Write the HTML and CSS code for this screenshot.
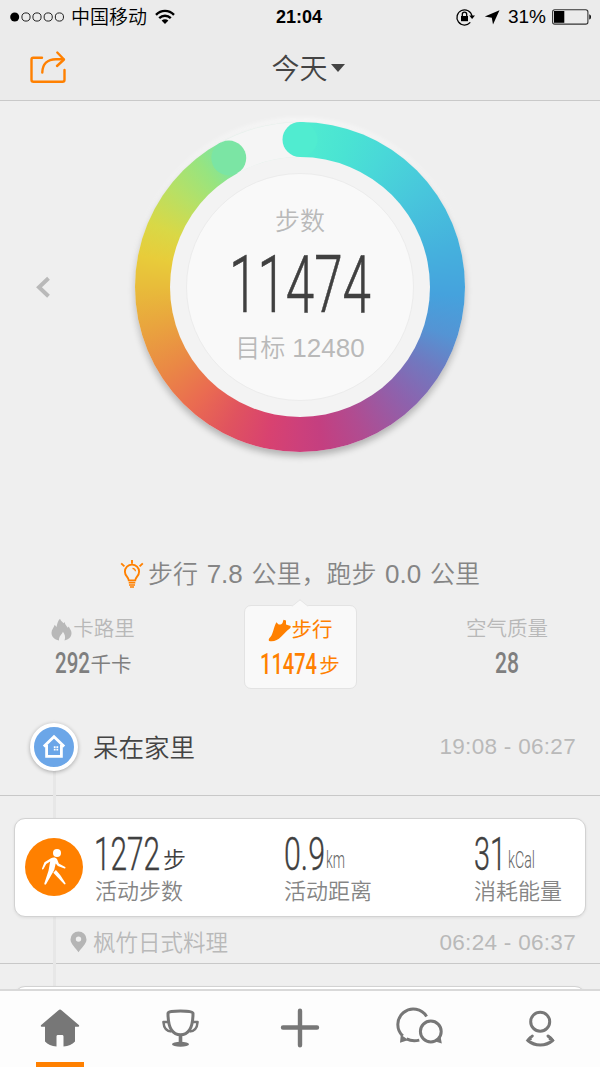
FILE: index.html
```html
<!DOCTYPE html>
<html lang="zh-CN">
<head>
  <meta charset="UTF-8">
  <title>今天</title>
  <link rel="stylesheet" href="styles.css">
</head>
<body>
  <div class="app">
    <div class="status">
      <div class="status-left">
        <svg width="54" height="12" viewBox="0 0 54 12">
          <circle cx="4.7" cy="6" r="4.5" fill="#000"/>
          <g fill="none" stroke="#222" stroke-width="1">
            <circle cx="16" cy="6" r="4.1"/><circle cx="27" cy="6" r="4.1"/>
            <circle cx="38.2" cy="6" r="4.1"/><circle cx="49.4" cy="6" r="4.1"/>
          </g>
        </svg>
        <span class="carrier">中国移动</span>
        <svg class="wifi" width="20" height="16" viewBox="0 0 20 16">
          <g fill="none" stroke="#000" stroke-width="2.4">
            <path d="M1 5.8C6 .6 14 .6 19 5.8"/>
            <path d="M4.2 9.2c3.3-3.2 8.3-3.2 11.6 0"/>
          </g>
          <path d="M10 15l-3.4-3.5c2-1.7 4.8-1.7 6.8 0z"/>
        </svg>
      </div>
      <div class="clock">21:04</div>
      <div class="status-right">
        <svg width="20" height="18" viewBox="0 0 20 18">
          <path d="M14.3 14.4A7.6 7.6 0 1 1 16 8" fill="none" stroke="#000" stroke-width="1.3"/>
          <path d="M13.2 7.4h5.8l-2.9 3.5z"/>
          <rect x="5" y="8" width="7" height="5.2"/>
          <path d="M6.3 8.4V6.3a2.2 2.2 0 0 1 4.4 0v2.1" fill="none" stroke="#000" stroke-width="1.3"/>
        </svg>
        <svg class="locate" width="16" height="15" viewBox="0 0 16 15"><path d="M15.5.2L9 14.4 7.8 7.7.8 6.4z"/></svg>
        <span class="percent">31%</span>
        <svg width="40" height="16" viewBox="0 0 40 16">
          <rect x=".6" y=".7" width="35.3" height="14.4" rx="2.2" fill="none" stroke="#333" stroke-width="1.1"/>
          <rect x="2" y="2" width="10.3" height="11.8"/>
          <path d="M37.3 5.2c2.2.6 2.2 4.8 0 5.4z"/>
        </svg>
      </div>
    </div>

    <div class="header">
      <svg class="share" width="38" height="34" viewBox="0 0 38 34">
        <g fill="none" stroke="#ff8000" stroke-width="2.4" stroke-linecap="round" stroke-linejoin="round">
          <path d="M13 7.7H4.2Q2.5 7.7 2.5 9.4V29.8Q2.5 31.8 4.5 31.8H33.5Q35.500 31.8 35.500 29.8V20"/>
          <path d="M13.300 22.600C13.400 14 18.500 9.200 27 9.200H34.400"/>
          <path d="M28.300 2.500L35 9.500 28 16"/>
        </g>
      </svg>
      <div class="title">今天<i class="caret"></i></div>
    </div>

    <div class="goal">
      <svg class="prev" width="16" height="22" viewBox="0 0 16 22"><path d="M13.500 2.300L4 11.200 13.500 20.200" fill="none" stroke="#b9b9b9" stroke-width="4"/></svg>
      <div class="ring">
        <svg class="ring-gap" width="330" height="330" viewBox="0 0 330 330">
          <path d="M93.500 36.400A147.400 147.400 0 0 1 165 17.500" fill="none" stroke="#f5f5f5" stroke-width="34.600"/>
          <circle cx="93.800" cy="36" r="17.400" fill="#7be5a4"/>
          <circle cx="165" cy="17.500" r="17.500" fill="#50ecd0"/>
        </svg>
        <div class="ring-track">
          <div class="ring-face">
            <div class="face-label">步数</div>
            <svg class="face-number" width="146" height="68" viewBox="0 0 146 68"><text x="2" y="64" textLength="142" lengthAdjust="spacingAndGlyphs">11474</text></svg>
            <div class="face-goal">目标 <span>12480</span></div>
          </div>
        </div>
      </div>
    </div>

    <div class="tip">
      <svg width="24" height="28" viewBox="0 0 24 28">
        <g fill="none" stroke="#ff8000" stroke-width="1.9">
          <path d="M8.8 20.4c0-3.1-3.9-4.2-3.9-8.7a7.1 7.1 0 0 1 14.2 0c0 4.5-3.9 5.6-3.9 8.7z"/>
          <path d="M12.5 8.4c1.8.1 2.8 1.2 3 2.9" stroke-width="1.2"/>
          <path d="M12 0v3.8M1.2 3.4l3.2 3M22.8 3.4l-3.2 3"/>
          <path d="M8.7 22.6h6.6M9 25h6M10 27h4" stroke-width="1.6"/>
        </g>
      </svg>
      <span>步行 <b>7.8</b> 公里，跑步 <b>0.0</b> 公里</span>
    </div>

    <div class="stats">
      <div class="stat">
        <div class="stat-name">
          <svg width="21" height="23" viewBox="0 0 21 23"><path d="M8 22.4C3.500 21.700.5 18.800.5 14.800c0-3.400 2.400-4.800 3.200-8l1.800 2.100C6.400 5.500 6.600 3 9 .7c.8 2.200 2.300 3 3.600 4.600l1-1.300c.6 3 2 4 3.200 5.800l1-1.300c.6 2.200 2.700 3.600 2.700 6.500 0 4-2.900 6.800-7 7.400 1.300-3.200.4-5.900-1.600-8.600-.5 2.300-4.200 4.300-3.900 8.600z" fill="#b8b8b8"/></svg>卡路里
        </div>
        <div class="stat-value"><svg width="35" height="26" viewBox="0 0 35 26"><text x="0" y="23" textLength="35" lengthAdjust="spacingAndGlyphs">292</text></svg><em>千卡</em></div>
      </div>
      <div class="stat active">
        <div class="stat-name">
          <svg width="23" height="23" viewBox="0 0 23 23"><path d="M1 22c-.8-2 .3-2.800 1.600-4.200C5.300 14.600 5.500 8.300 8.400 3.300l1.900 2c1.500.6 3.200.2 4.200-1.300L15.500.8 18 1.600v3.800l4.600 1.700c.6 1.700-.9 2.500-3.300 4.500l-6.200 6.200C9.500 21.600 6 22.700 1 22z" fill="#ff8000"/></svg>步行
        </div>
        <div class="stat-value"><svg width="58" height="26" viewBox="0 0 58 26"><text x="0" y="23" textLength="57" lengthAdjust="spacingAndGlyphs">11474</text></svg><em>步</em></div>
      </div>
      <div class="stat">
        <div class="stat-name">空气质量</div>
        <div class="stat-value"><svg width="24" height="26" viewBox="0 0 24 26"><text x="0" y="23" textLength="24" lengthAdjust="spacingAndGlyphs">28</text></svg></div>
      </div>
    </div>

    <div class="timeline">
      <div class="place-row">
        <div class="place-icon">
          <svg width="24" height="26" viewBox="0 0 24 26">
            <path d="M1.800 12.500L12 2.800 22.200 12.500M4.600 11V22.300H19.400V11" fill="none" stroke="#fff" stroke-width="2.800"/>
            <path d="M11.800 12.200h1.800v1.800h-1.800zM14.400 12.200h1.800v1.800h-1.800zM11.800 14.800h1.800v1.800h-1.800zM14.400 14.800h1.800v1.800h-1.800z" fill="#fff"/>
          </svg>
        </div>
        <span class="place-name">呆在家里</span>
        <span class="time">19:08 - 06:27</span>
      </div>
      <div class="card">
        <div class="walk">
          <svg width="26" height="38" viewBox="0 0 26 38" fill="#fff">
            <circle cx="16" cy="5" r="4"/>
            <path d="M10 10.300c2.200-1.300 4.900-1 6 .800l1.800 4.400 6.400 3.400c.7.800.2 1.600-.7 1.600l-6.600-2.600-2.200-2.400-1.500 6.500-8 14c-.8 1.200-2.200.7-1.800-.8l4.100-12.500 1.700-9.300-4 2.700-2.700 5c-.9.900-1.700.4-1.500-.6l2.500-6.200z"/>
            <path d="M12.300 24.800l2.600-2.800 4.300 5 5.300 8.300c.4 1-.7 1.500-1.500.8z"/>
          </svg>
        </div>
        <div class="metrics">
          <div class="metric">
            <div class="metric-value"><svg width="66" height="44" viewBox="0 0 66 44"><text x="-1" y="40" textLength="66" lengthAdjust="spacingAndGlyphs">1272</text></svg><em>步</em></div>
            <div class="metric-name">活动步数</div>
          </div>
          <div class="metric">
            <div class="metric-value"><svg width="62" height="44" viewBox="0 0 62 44"><text x="0" y="40" textLength="41" lengthAdjust="spacingAndGlyphs">0.9</text><text class="unit" x="42" y="38" textLength="19" lengthAdjust="spacingAndGlyphs">km</text></svg></div>
            <div class="metric-name">活动距离</div>
          </div>
          <div class="metric">
            <div class="metric-value"><svg width="66" height="44" viewBox="0 0 66 44"><text x="0" y="40" textLength="32" lengthAdjust="spacingAndGlyphs">31</text><text class="unit" x="34" y="38" textLength="27" lengthAdjust="spacingAndGlyphs">kCal</text></svg></div>
            <div class="metric-name">消耗能量</div>
          </div>
        </div>
      </div>
      <div class="spot-row">
        <svg width="17" height="22" viewBox="0 0 17 22"><path d="M8.500 21.200C6 17.200.5 12.800.5 8.400a8 8 0 0 1 16 0c0 4.400-5.500 8.800-8 12.800zM8.500 5.400a2.700 2.700 0 1 0 0 5.400 2.700 2.700 0 0 0 0-5.400z" fill="#b5b5b5" fill-rule="evenodd"/></svg>
        <span class="spot-name">枫竹日式料理</span>
        <span class="time">06:24 - 06:37</span>
      </div>
      <div class="card next"></div>
    </div>

    <div class="tabs">
      <div class="tab selected">
        <svg width="40" height="40" viewBox="0 0 40 40"><path d="M20 1.500c.6 0 1 .3 1.500.7l17 14.600c1.200 1 .8 2-.6 2H35v14.600c-2.800 2.700-6.500 4.700-11.500 5.200v-10c0-1-.6-1.500-1.500-1.500h-4c-.9 0-1.500.5-1.500 1.500v10C11.500 38.100 7.800 36.100 5 33.400V18.800H2.100c-1.400 0-1.800-1-.6-2l17-14.600c.5-.4.900-.7 1.500-.7z" fill="#777"/></svg>
      </div>
      <div class="tab">
        <svg width="40" height="40" viewBox="0 0 40 40">
          <g fill="none" stroke="#777" stroke-width="3" stroke-linejoin="round">
            <path d="M8 5.200C8 3.500 13 2.900 20.500 2.900S33 3.500 33 5.200C33 16 31 26.800 20.500 26.800S8 16 8 5.200z"/>
            <path d="M8.500 14H3.400c.4 5.300 2.800 9.300 8 9.600M32.500 14h5.100c-.4 5.300-2.800 9.300-8 9.600" stroke-width="2.500"/>
            <path d="M20.500 27v8" stroke-width="3.600"/>
          </g>
          <ellipse cx="20.500" cy="36.200" rx="8.500" ry="2.500" fill="#777"/>
        </svg>
      </div>
      <div class="tab">
        <svg width="40" height="40" viewBox="0 0 40 40"><path d="M20 2.700v34.600M3 19.500h34" stroke="#777" stroke-width="4.400" stroke-linecap="round"/></svg>
      </div>
      <div class="tab">
        <svg width="46" height="40" viewBox="0 0 46 40">
          <g fill="none" stroke="#777" stroke-width="3">
            <path d="M29.600 8.500A15.500 15.500 0 1 0 5.800 27.900M9.600 30.900c3.700 1.900 8 2.300 12.700 1.200"/>
            <circle cx="33.800" cy="23.500" r="10.400"/>
          </g>
          <path d="M3.800 26.800L3 34.800l8.500-2.800zM43.500 28.300l1.300 7.200-8-2.400z" fill="#777"/>
        </svg>
      </div>
      <div class="tab">
        <svg width="40" height="40" viewBox="0 0 40 40">
          <g fill="none" stroke="#777" stroke-width="3" stroke-linecap="round" stroke-linejoin="round">
            <circle cx="20.200" cy="13.700" r="9.500"/>
            <path d="M12.300 28L9.500 30.500 7.800 32.500C15 38.500 25.500 38.500 32.700 32.500L31 30.500 28 28"/>
          </g>
          <path d="M5.600 33l4.400-5 2 4zM34.900 33l-4.400-5-2 4z" fill="#777"/>
        </svg>
      </div>
    </div>
  </div>
</body>
</html>
```
FILE: styles.css
```css
body {
  margin: 0;
  background: #efefef;
  font-family: "Liberation Sans", "Noto Sans CJK SC", sans-serif;
  font-weight: 350;
  color: #444;
}
.app {
  width: 600px;
  height: 1067px;
  overflow: hidden;
  display: flex;
  flex-direction: column;
  white-space: nowrap;
}
svg {
  display: block;
  flex: none;
  overflow: visible;
}
svg text {
  font-family: Roboto, sans-serif;
  fill: currentColor;
}
em {
  font-style: normal;
}

/* status bar */
.status {
  height: 34px;
  background: #ebebeb;
  color: #000;
  display: grid;
  grid-template-columns: 1fr auto 1fr;
  align-items: center;
  padding: 0 8px 0 10px;
  box-sizing: border-box;
  font-size: 19px;
  line-height: 32px;
}
.status-left, .status-right {
  display: flex;
  align-items: center;
}
.status-right {
  justify-content: flex-end;
}
.carrier {
  margin: 1px 8px 0 7px;
}
.clock {
  font-weight: bold;
  font-size: 18px;
  padding-right: 4px;
}
.locate {
  margin: 0 8px 0 8px;
}
.percent {
  margin-right: 6px;
}

/* header */
.header {
  height: 67px;
  box-sizing: border-box;
  background: #ebebeb;
  border-bottom: 1px solid #c9c9c9;
  display: grid;
  grid-template-columns: 120px 1fr 120px;
  align-items: center;
}
.share {
  margin: 0 0 0 29px;
}
.title {
  display: flex;
  align-items: center;
  justify-content: center;
  padding: 0 0 1px 16px;
  font-size: 28px;
}
.caret {
  margin: 2px 0 0 3px;
  border: 7px solid transparent;
  border-top: 8px solid #444;
  border-bottom: 0;
}

/* ring */
.goal {
  height: 451px;
  display: grid;
  grid-template-columns: 135px 330px 135px;
  padding-top: 21px;
  box-sizing: border-box;
}
.prev {
  margin: 154px 0 0 35px;
}
.ring {
  position: relative;
  width: 330px;
  height: 330px;
  border-radius: 50%;
  display: grid;
  place-items: center;
  background: conic-gradient(#50ecd0 0deg, #4ae3d3 18deg, #49d8d8 32deg, #48c6dc 52deg, #45b1dd 75deg, #45a2dd 93deg, #5494d4 108deg, #7178bf 122deg, #8d62ad 137deg, #b04c91 157deg, #c43f80 172deg, #cc407b 180deg, #d84270 192deg, #e0535f 207deg, #ea6b51 222deg, #ea8845 238deg, #e9a43e 255deg, #e8bc3a 270deg, #e8cc3a 281deg, #d9d846 293deg, #b6e066 308deg, #97e480 321deg, #7be5a4 331deg, #e2f2ea 332deg, #e2f2ea 359deg, #50ecd0 360deg);
  box-shadow: 0 4px 7px rgba(0, 0, 0, .28), 0 -2px 7px #fff;
}
.ring-gap {
  position: absolute;
  left: 0;
  top: 0;
}
.ring-track {
  width: 260px;
  height: 260px;
  border-radius: 50%;
  background: #f3f3f3;
  display: grid;
  place-items: center;
  position: relative;
}
.ring-face {
  width: 228px;
  height: 228px;
  box-sizing: border-box;
  border: 1px solid #ececec;
  border-radius: 50%;
  background: #f9f9f9;
  display: flex;
  flex-direction: column;
  align-items: center;
  color: #b9b9b9;
}
.face-label {
  margin-top: 29px;
  font-size: 25px;
  line-height: 36px;
}
.face-number {
  margin-top: 9px;
  font-size: 79px;
  font-weight: 300;
  color: #404040;
}
.face-number text {
  stroke: currentColor;
  stroke-width: .6px;
}
.face-goal {
  margin-top: 14px;
  font-size: 25px;
  line-height: 36px;
}
.face-goal span {
  font-size: 26px;
}

/* tip line */
.tip {
  height: 44px;
  display: flex;
  align-items: center;
  padding-left: 120px;
  font-size: 25px;
  color: #858585;
}
.tip span {
  margin: -4px 0 0 4px;
  word-spacing: 1.7px;
}
.tip b {
  font-weight: normal;
  font-size: 26px;
}

/* stats */
.stats {
  height: 84px;
  margin-top: 9px;
  display: grid;
  grid-template-columns: 186px 113px 186px;
  column-gap: 57.5px;
}
.stat {
  box-sizing: border-box;
  padding-top: 9px;
  color: #7f7f7f;
}
.stat-name {
  display: flex;
  justify-content: center;
  align-items: center;
  font-size: 20.5px;
  line-height: 30px;
  color: #b8b8b8;
}
.stat-name svg {
  margin-right: 1px;
}
.stat-value {
  display: flex;
  justify-content: center;
  align-items: center;
  height: 34px;
  margin-top: 2px;
  font-size: 20.5px;
  font-weight: 400;
  line-height: 34px;
}
.stat-value text {
  font-size: 30px;
  font-weight: 500;
}
.stat-value em {
  margin: 3px 0 0 1px;
}
.active {
  position: relative;
  border: 1px solid #e3e3e3;
  border-radius: 7px;
  background: #f9f9f9;
}
.active, .active .stat-name {
  color: #ff8000;
  font-weight: 400;
}
.active::before {
  content: "";
  position: absolute;
  left: 50%;
  top: -6px;
  width: 11px;
  height: 11px;
  margin-left: -6px;
  background: #f9f9f9;
  border: 1px solid #e3e3e3;
  border-right: 0;
  border-bottom: 0;
  transform: scaleY(.8) rotate(45deg);
}

/* timeline */
.timeline {
  position: relative;
  height: 300px;
  overflow: hidden;
}
.timeline::before {
  content: "";
  position: absolute;
  left: 53px;
  top: 60px;
  bottom: 0;
  width: 3px;
  background: #e7e7e7;
}
.place-row {
  height: 107px;
  box-sizing: border-box;
  border-bottom: 1px solid #c8c8c8;
  display: flex;
  align-items: center;
  padding: 9px 24px 0 30px;
}
.place-icon {
  position: relative;
  width: 40px;
  height: 40px;
  border: 4px solid #fff;
  border-radius: 50%;
  background: #6ba6e8;
  box-shadow: 0 1px 4px rgba(0, 0, 0, .3);
  display: grid;
  place-items: center;
}
.place-name {
  margin: -2px 0 0 15px;
  font-size: 25.5px;
}
.time {
  margin: 1px 0 0 auto;
  font-size: 22.5px;
  letter-spacing: .3px;
  color: #b9b9b9;
}
.card {
  position: relative;
  height: 99px;
  box-sizing: border-box;
  margin: 22px 14px 0;
  border: 1px solid #d2d2d2;
  border-radius: 11px;
  background: #fff;
  box-shadow: 0 1px 3px rgba(0, 0, 0, .08);
  display: flex;
  align-items: center;
  padding-left: 10px;
}
.walk {
  width: 58px;
  height: 58px;
  margin-bottom: 2px;
  border-radius: 50%;
  background: #ff8000;
  display: grid;
  place-items: center;
}
.metrics {
  margin-left: 12px;
  display: grid;
  grid-template-columns: 189px 190px 100px;
}
.metric-value {
  display: flex;
  height: 48px;
  color: #404040;
}
.metric-value svg {
  margin-top: 1px;
}
.metric-value text {
  font-size: 47px;
  font-weight: 300;
  stroke: currentColor;
  stroke-width: .4px;
}
.metric-value .unit {
  font-size: 23px;
  fill: #666;
  stroke: none;
}
.metric-value em {
  font-size: 23px;
  line-height: 62px;
  margin-left: 2px;
}
.metric-name {
  font-size: 22px;
  line-height: 30px;
  color: #858585;
}
.spot-row {
  height: 47px;
  box-sizing: border-box;
  border-bottom: 1px solid #c8c8c8;
  display: flex;
  align-items: center;
  padding: 4px 24px 0 70px;
}
.spot-name {
  margin: -3px 0 0 6px;
  font-size: 22.5px;
  color: #b9b9b9;
}

/* tab bar */
.tabs {
  height: 78px;
  box-sizing: border-box;
  border-top: 2px solid #d9d9d9;
  background: #fdfdfd;
  display: grid;
  grid-template-columns: repeat(5, 120px);
}
.tab {
  height: 77px;
  box-sizing: border-box;
  padding-top: 17px;
  display: flex;
  flex-direction: column;
  align-items: center;
}
.selected::after {
  content: "";
  width: 48px;
  height: 6px;
  margin-top: 14px;
  background: #ff8000;
}
```
